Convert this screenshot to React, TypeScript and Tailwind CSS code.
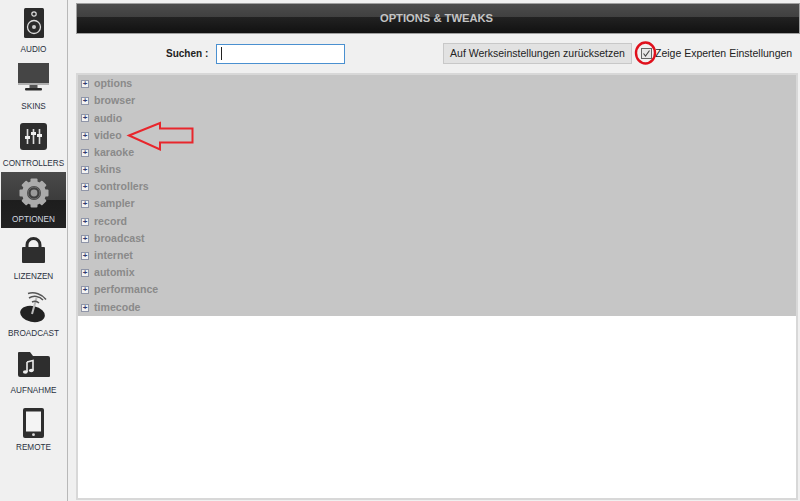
import * as React from "react"

const sections = [
  "options", "browser", "audio", "video", "karaoke", "skins", "controllers",
  "sampler", "record", "broadcast", "internet", "automix", "performance", "timecode",
]

function AudioIcon() {
  return (
    <svg width="20" height="30" viewBox="0 0 20 30">
      <rect width="20" height="30" rx="1.5" fill="#2b2b2b" />
      <circle cx="10" cy="6" r="2.2" fill="none" stroke="#ddd" strokeWidth="1.2" />
      <circle cx="10" cy="19" r="6.5" fill="none" stroke="#ddd" strokeWidth="1.3" />
      <circle cx="10" cy="19" r="2" fill="#ccc" />
    </svg>
  )
}

function SkinsIcon() {
  return (
    <svg width="31" height="28" viewBox="0 0 31 28">
      <rect width="31" height="20" fill="#454545" />
      <rect y="20" width="31" height="2" fill="#b0b0b0" />
      <rect x="11.5" y="22" width="8" height="3" fill="#555" />
      <rect x="7" y="25" width="17" height="2.5" rx="1" fill="#2a2a2a" />
    </svg>
  )
}

function ControllersIcon() {
  return (
    <svg width="27" height="27" viewBox="0 0 27 27">
      <rect width="27" height="27" rx="3" fill="#2e2e2e" />
      <g stroke="#ddd" strokeWidth="1.6">
        <path d="M7.5 6v15M13.5 6v15M19.5 6v15" />
      </g>
      <g fill="#eee">
        <rect x="5" y="13" width="5" height="3" />
        <rect x="11" y="9" width="5" height="3" />
        <rect x="17" y="11" width="5" height="3" />
      </g>
    </svg>
  )
}

function GearIcon() {
  const teeth = [0, 45, 90, 135, 180, 225, 270, 315]
  return (
    <svg width="30" height="30" viewBox="0 0 30 30">
      <g fill="#ababab">
        {teeth.map((a) => (
          <rect key={a} x="11.5" y="0.5" width="7" height="7" rx="1" transform={`rotate(${a} 15 15)`} />
        ))}
      </g>
      <circle cx="15" cy="15" r="9.5" fill="none" stroke="#ababab" strokeWidth="5" />
      <circle cx="15" cy="15" r="3.4" fill="#9a9a9a" />
      <circle cx="15" cy="15" r="6" fill="none" stroke="#777" strokeWidth="0.8" />
    </svg>
  )
}

function LockIcon() {
  return (
    <svg width="23" height="26" viewBox="0 0 23 26">
      <path d="M5 12V8a6.5 6.5 0 0 1 13 0v4" fill="none" stroke="#2b2b2b" strokeWidth="3" />
      <rect y="10" width="23" height="16" rx="1" fill="#2e2e2e" />
    </svg>
  )
}

function BroadcastIcon() {
  return (
    <svg width="27" height="31" viewBox="0 0 27 31">
      <ellipse cx="12.5" cy="22" rx="12.5" ry="8" fill="#222" transform="rotate(12 12.5 22)" />
      <path d="M12 22l4.5-16" stroke="#bbb" strokeWidth="2" />
      <path d="M9 6a11 11 0 0 1 14 2M8 1.5a17 17 0 0 1 18 6" fill="none" stroke="#555" strokeWidth="1.5" />
      <path d="M12 10a6 6 0 0 1 7 1" fill="none" stroke="#555" strokeWidth="1.5" />
    </svg>
  )
}

function FolderIcon() {
  return (
    <svg width="32" height="25" viewBox="0 0 32 25">
      <path d="M1 0h11l3 4h15a2 2 0 0 1 2 2v18a1 1 0 0 1-1 1H2a2 2 0 0 1-2-2V1a1 1 0 0 1 1-1z" fill="#2e2e2e" />
      <path d="M9 10l6-1.5v10M9 10v10" fill="none" stroke="#eee" strokeWidth="1.6" />
      <ellipse cx="7.3" cy="20" rx="2.4" ry="1.8" fill="#eee" />
      <ellipse cx="13.3" cy="18.5" rx="2.4" ry="1.8" fill="#eee" />
    </svg>
  )
}

function RemoteIcon() {
  return (
    <svg width="21" height="30" viewBox="0 0 21 30">
      <rect width="21" height="30" rx="2" fill="#2e2e2e" />
      <rect x="3" y="3.5" width="15" height="20" fill="#f4f4f4" />
      <circle cx="10.5" cy="26.7" r="1.4" fill="#ddd" />
    </svg>
  )
}

const navItems = [
  { label: "AUDIO", icon: AudioIcon },
  { label: "SKINS", icon: SkinsIcon, iconClass: "pb-[5px]" },
  { label: "CONTROLLERS", icon: ControllersIcon, iconClass: "pb-[1px]" },
  { label: "OPTIONEN", icon: GearIcon, iconClass: "pb-[2px]", active: true },
  { label: "LIZENZEN", icon: LockIcon },
  { label: "BROADCAST", icon: BroadcastIcon },
  { label: "AUFNAHME", icon: FolderIcon },
  { label: "REMOTE", icon: RemoteIcon, iconClass: "pt-[4px]" },
]

function NavItem({ label, icon: Icon, iconClass, active }: { label: string; icon: () => React.JSX.Element; iconClass?: string; active?: boolean }) {
  return (
    <div
      className={
        "flex h-[56.85px] flex-col items-center justify-between pb-[2px] pt-[5px] " +
        (active ? "bg-[linear-gradient(#4a4a4a_0%,#3c3c3c_50%,#1d1d1d_50%,#222_100%)] text-[#d4dae0]" : "text-[#2a3040]")
      }
    >
      <div className={"flex h-[34px] items-center justify-center " + (iconClass ?? "")}>
        <Icon />
      </div>
      <span className="text-[8.2px] leading-[12px]">{label}</span>
    </div>
  )
}

function TreeRow({ name }: { name: string }) {
  return (
    <div className="flex h-[17.2px] items-center">
      <span className="ml-[3px] flex h-[8px] w-[8px] items-center justify-center border border-[#8f95a8] bg-[#f2f2f2] text-[8px] font-bold leading-none text-[#303a70]">
        +
      </span>
      <span className="ml-[5px] text-[10.6px] font-bold text-[#8a8a8a]">{name}</span>
    </div>
  )
}

export default function App() {
  return (
    <div className="relative flex h-[501px] w-[800px] overflow-hidden bg-[#f0f0f0] font-['Liberation_Sans',Arial,sans-serif]">
      <aside className="h-full w-[68px] shrink-0 border-r border-[#b8b8b8] pl-[1px] pr-[1px] pt-[1px]">
        {navItems.map((item) => (
          <NavItem key={item.label} {...item} />
        ))}
      </aside>

      <main className="flex min-w-0 flex-1 flex-col pb-[1px] pl-[8px] pt-[3px]">
        <div className="flex h-[31px] items-center justify-center border border-[#a0a0a0] bg-[linear-gradient(#4c4c4c_0%,#404040_45%,#222_45%,#111_100%)] pr-[3px] text-[11.2px] font-bold text-[#c4c4c4]">
          OPTIONS &amp; TWEAKS
        </div>

        <div className="mt-[9px] flex h-[21px] items-center">
          <span className="ml-[90px] w-[42px] shrink-0 whitespace-nowrap text-[10px] font-bold text-[#222]">Suchen :</span>
          <div className="ml-[8px] flex h-[20px] w-[129px] shrink-0 items-center border border-[#4a90d0] bg-white pl-[4px]">
            <div className="h-[13px] w-px bg-[#222]" />
          </div>
          <button className="ml-[98px] h-[21px] w-[189px] shrink-0 border border-[#c8c8c8] bg-[#e2e2e2] text-[10.5px] text-[#222]">
            Auf Werkseinstellungen zurücksetzen
          </button>
          <span className="ml-[9px] flex h-[11px] w-[11px] shrink-0 items-center justify-center border border-[#666] bg-[#e8e8e8]">
            <svg width="9" height="9" viewBox="0 0 9 9" className="shrink-0">
              <path d="M1.5 4.5l2 2.5 4-5.5" fill="none" stroke="#444" strokeWidth="1.1" />
            </svg>
          </span>
          <span className="ml-[3px] whitespace-nowrap text-[10.5px] text-[#222]">Zeige Experten Einstellungen</span>
        </div>

        <div className="mr-[2px] mt-[9px] flex-1 border-2 border-[#d8d8d8] bg-white">
          <div className="bg-[#c6c6c6] pt-[0.5px]">
            {sections.map((name) => (
              <TreeRow key={name} name={name} />
            ))}
          </div>
        </div>
      </main>

      {/* red annotations drawn on top of the screenshot */}
      <svg className="absolute left-0 top-0" width="800" height="501" viewBox="0 0 800 501" fill="none">
        <path d="M129 135.5L160 123v5.5h32.5v14H160V149.5z" stroke="#e8262c" strokeWidth="2" />
        <ellipse cx="645.5" cy="53" rx="9.5" ry="10.5" stroke="#e0101c" strokeWidth="2.4" />
      </svg>
    </div>
  )
}
